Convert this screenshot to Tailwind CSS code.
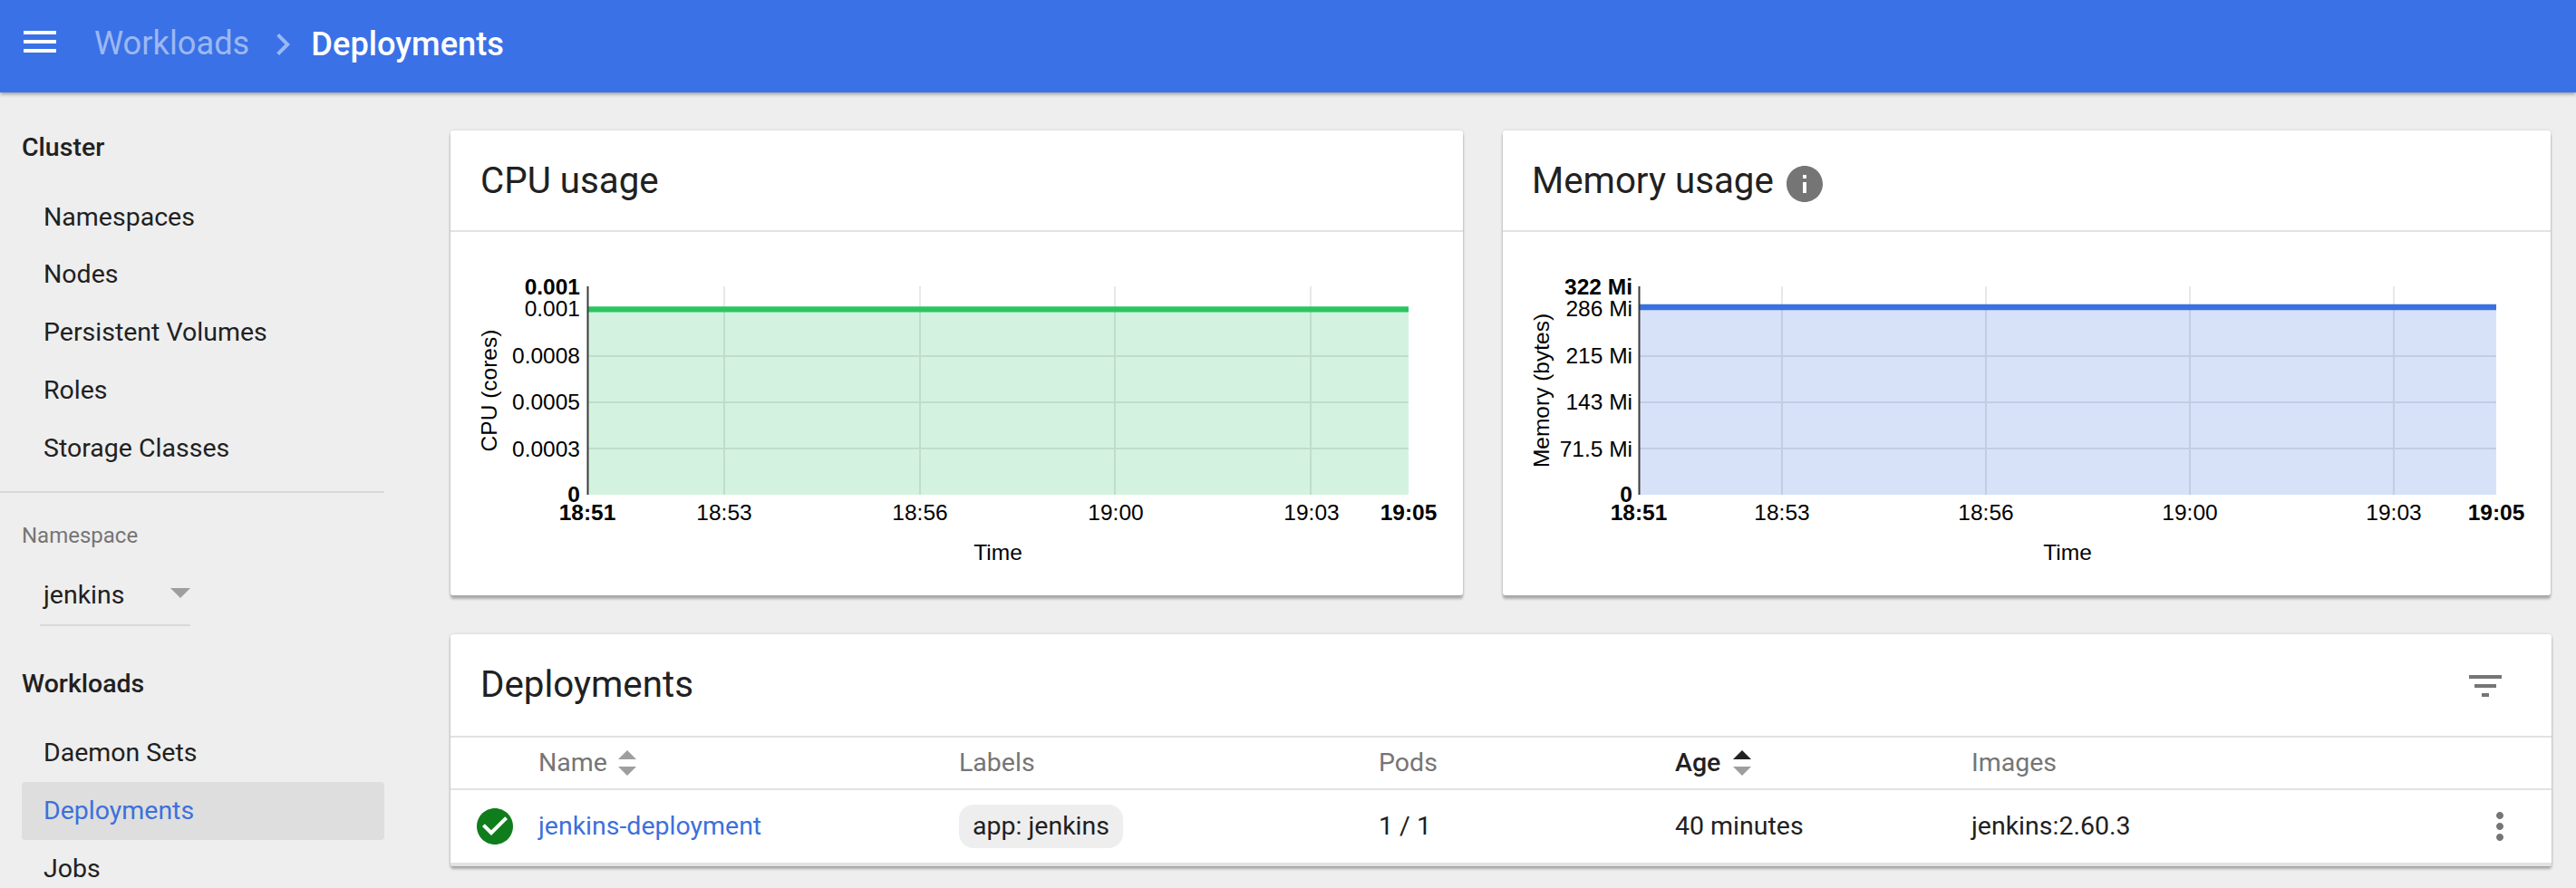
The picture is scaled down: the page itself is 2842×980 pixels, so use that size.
<!DOCTYPE html>
<html lang="en">
<head>
    <meta charset="UTF-8">
    <title>Deployments</title>
    <script src="https://cdn.jsdelivr.net/npm/@tailwindcss/browser@4"></script>
</head>
<body class="bg-[#eeeeee] font-['Roboto',sans-serif] text-[#212121] h-[980px] overflow-hidden">
    <!-- Top bar -->
    <header class="h-[102px] bg-[#3a71e6] shadow-[0_2px_4px_rgba(0,0,0,.35)] flex items-center pl-[20px] pb-[6px] relative text-[36.25px] leading-none">
        <svg class="w-[48px] h-[48px] mr-[36px] mb-[4px]" viewBox="0 0 24 24" fill="#fff"><path d="M3 18h18v-2H3v2zm0-5h18v-2H3v2zm0-7v2h18V6H3z"/></svg>
        <span class="text-white/50">Workloads</span>
        <svg class="w-[48px] h-[48px] ml-[13px] mr-[7px] mt-[2px]" viewBox="0 0 24 24" fill="#9ab8f3"><path d="M8.6 7.4 10 6l6 6-6 6-1.4-1.4L13.2 12z"/></svg>
        <span class="text-white font-medium pt-[3px]">Deployments</span>
    </header>

    <div class="flex">
        <!-- Sidebar -->
        <aside class="w-[424px] mr-[73px] pt-[28px] shrink-0 text-[28.5px]">
            <div class="h-[64px] pl-[24px] pt-[2px] flex items-center font-medium">Cluster</div>
            <ul class="mt-[14px] pl-[24px]">
                <li class="h-[63.75px] pl-[24px] flex items-center">Namespaces</li>
                <li class="h-[63.75px] pl-[24px] flex items-center">Nodes</li>
                <li class="h-[63.75px] pl-[24px] flex items-center">Persistent Volumes</li>
                <li class="h-[63.75px] pl-[24px] flex items-center">Roles</li>
                <li class="h-[63.75px] pl-[24px] flex items-center">Storage Classes</li>
            </ul>
            <div class="mt-[15px] border-t-2 border-[#d9d9d9]"></div>
            <div class="mt-[31px] pl-[24px] h-[32px] flex items-center text-[24px] text-[#757575]">Namespace</div>
            <div class="ml-[44px] mt-[19px] w-[166px] h-[65px] pl-[4px] border-b-2 border-[#d9d9d9] flex items-center justify-between">
                <span>jenkins</span>
                <span class="w-0 h-0 border-x-[11px] border-x-transparent border-t-[11px] border-t-[#9e9e9e] mb-[6px]"></span>
            </div>
            <div class="mt-[32px] h-[64px] pl-[24px] pt-[2px] flex items-center font-medium">Workloads</div>
            <ul class="mt-[12px] pl-[24px]">
                <li class="h-[64px] pl-[24px] pt-[2px] flex items-center">Daemon Sets</li>
                <li class="h-[64px] pl-[24px] pt-[2px] flex items-center bg-[#dedede] rounded-[4px] text-[#3d70dc]">Deployments</li>
                <li class="h-[64px] pl-[24px] pt-[2px] flex items-center">Jobs</li>
            </ul>
        </aside>

        <!-- Main content -->
        <main class="pt-[42px] w-[2318px] shrink-0">
            <div class="flex gap-[44px]">
                <!-- CPU card -->
                <section class="w-[1117px] h-[513px] bg-white rounded-[3px] shadow-[0_4px_3px_rgba(0,0,0,.28),0_0_3px_rgba(0,0,0,.14)]">
                    <div class="h-[112px] border-b-2 border-[#e2e2e2] pl-[33px] pt-[3px] flex items-center text-[40.3px]">CPU usage</div>
                    <svg class="block font-['Liberation_Sans',sans-serif] text-[24.5px]" width="1117" height="401" viewBox="497 256 1117 401">
                        <rect x="648" y="341" width="906" height="205" fill="#d3f3e0"/>
                        <g stroke="#000" stroke-opacity=".09" stroke-width="2">
                            <path d="M799 316V546M1015 316V546M1230 316V546M1446 316V546M648 393H1554M648 444H1554M648 495H1554"/>
                        </g>
                        <path d="M648 341.4H1554" stroke="#2bc55f" stroke-width="6.4"/>
                        <path d="M648.5 316V546" stroke="#3a3a3a" stroke-width="2"/>
                        <g text-anchor="end" dominant-baseline="central">
                            <text x="640" y="316" font-weight="bold">0.001</text>
                            <text x="640" y="340.7">0.001</text>
                            <text x="640" y="392">0.0008</text>
                            <text x="640" y="443.5">0.0005</text>
                            <text x="640" y="495">0.0003</text>
                            <text x="640" y="545.6" font-weight="bold">0</text>
                        </g>
                        <g text-anchor="middle" dominant-baseline="central">
                            <text x="648" y="565" font-weight="bold">18:51</text>
                            <text x="799" y="565">18:53</text>
                            <text x="1015" y="565">18:56</text>
                            <text x="1231" y="565">19:00</text>
                            <text x="1447" y="565">19:03</text>
                            <text x="1554" y="565" font-weight="bold">19:05</text>
                            <text x="1101" y="609">Time</text>
                            <text transform="translate(539.5 431) rotate(-90)">CPU (cores)</text>
                        </g>
                    </svg>
                </section>

                <!-- Memory card -->
                <section class="w-[1156px] h-[513px] bg-white rounded-[3px] shadow-[0_4px_3px_rgba(0,0,0,.28),0_0_3px_rgba(0,0,0,.14)]">
                    <div class="h-[112px] border-b-2 border-[#e2e2e2] pl-[32px] pt-[3px] flex items-center text-[40.3px]">
                        Memory usage
                        <svg class="w-[48px] h-[48px] ml-[10px] mt-[4px]" viewBox="0 0 24 24" fill="#757575"><path d="M12 2C6.48 2 2 6.48 2 12s4.48 10 10 10 10-4.48 10-10S17.52 2 12 2zm1 15h-2v-6h2v6zm0-8h-2V7h2v2z"/></svg>
                    </div>
                    <svg class="block font-['Liberation_Sans',sans-serif] text-[24.5px]" width="1156" height="401" viewBox="1658 256 1156 401">
                        <rect x="1808" y="339" width="946" height="207" fill="#d7e2f9"/>
                        <g stroke="#000" stroke-opacity=".09" stroke-width="2">
                            <path d="M1966 316V546M2191 316V546M2416 316V546M2641 316V546M1808 393H2754M1808 444H2754M1808 495H2754"/>
                        </g>
                        <path d="M1808 339H2754" stroke="#3a70e0" stroke-width="6.4"/>
                        <path d="M1808.5 316V546" stroke="#3a3a3a" stroke-width="2"/>
                        <g text-anchor="end" dominant-baseline="central">
                            <text x="1801" y="316" font-weight="bold">322 Mi</text>
                            <text x="1801" y="340.7">286 Mi</text>
                            <text x="1801" y="392">215 Mi</text>
                            <text x="1801" y="443.5">143 Mi</text>
                            <text x="1801" y="495">71.5 Mi</text>
                            <text x="1801" y="545.6" font-weight="bold">0</text>
                        </g>
                        <g text-anchor="middle" dominant-baseline="central">
                            <text x="1808" y="565" font-weight="bold">18:51</text>
                            <text x="1966" y="565">18:53</text>
                            <text x="2191" y="565">18:56</text>
                            <text x="2416" y="565">19:00</text>
                            <text x="2641" y="565">19:03</text>
                            <text x="2754" y="565" font-weight="bold">19:05</text>
                            <text x="2281" y="609">Time</text>
                            <text transform="translate(1700 431) rotate(-90)">Memory (bytes)</text>
                        </g>
                    </svg>
                </section>
            </div>

            <!-- Deployments table -->
            <section class="mt-[43px] w-[2318px] h-[256px] bg-white rounded-[3px] shadow-[0_3px_3px_rgba(0,0,0,.28),0_0_3px_rgba(0,0,0,.14)] text-[28.5px]">
                <div class="h-[114px] border-b-2 border-[#e2e2e2] pl-[33px] pr-[49px] pt-[1px] flex items-center justify-between">
                    <span class="text-[40.3px]">Deployments</span>
                    <svg class="w-[48px] h-[48px]" viewBox="0 0 24 24" fill="#757575"><path d="M10 18h4v-2h-4v2zM3 6v2h18V6H3zm3 7h12v-2H6v2z"/></svg>
                </div>
                <div class="h-[58px] border-b-2 border-[#e2e2e2] grid grid-cols-[97px_464px_463px_327px_327px_1fr] items-center text-[#757575]">
                    <span></span>
                    <span class="flex items-center gap-[12px]">Name
                        <span class="flex flex-col gap-[8px]">
                            <span class="w-0 h-0 border-x-[10px] border-x-transparent border-b-[10px] border-b-[#9e9e9e]"></span>
                            <span class="w-0 h-0 border-x-[10px] border-x-transparent border-t-[10px] border-t-[#9e9e9e]"></span>
                        </span>
                    </span>
                    <span>Labels</span>
                    <span>Pods</span>
                    <span class="flex items-center gap-[14px] text-[#212121] font-medium">Age
                        <span class="flex flex-col gap-[8px]">
                            <span class="w-0 h-0 border-x-[10px] border-x-transparent border-b-[10px] border-b-[#212121]"></span>
                            <span class="w-0 h-0 border-x-[10px] border-x-transparent border-t-[10px] border-t-[#9e9e9e]"></span>
                        </span>
                    </span>
                    <span>Images</span>
                </div>
                <div class="h-[80px] grid grid-cols-[97px_464px_463px_327px_327px_1fr] items-center">
                    <span class="pl-[25px] flex">
                        <svg class="w-[48px] h-[48px]" viewBox="0 0 24 24"><path fill="#0f7d1c" d="M12 2C6.48 2 2 6.48 2 12s4.48 10 10 10 10-4.48 10-10S17.52 2 12 2z"/><path fill="#fff" d="m10 17-5-5 1.41-1.41L10 14.17l7.59-7.59L19 8z"/></svg>
                    </span>
                    <a href="#" class="text-[#3d70dc]">jenkins-deployment</a>
                    <span><span class="inline-flex items-center h-[48px] px-[15px] bg-[#eeeeee] rounded-[16px]">app: jenkins</span></span>
                    <span>1 / 1</span>
                    <span>40 minutes</span>
                    <span class="flex items-center justify-between pr-[33px]">jenkins:2.60.3
                        <svg class="w-[48px] h-[48px]" viewBox="0 0 24 24" fill="#757575"><path d="M12 8c1.1 0 2-.9 2-2s-.9-2-2-2-2 .9-2 2 .9 2 2 2zm0 2c-1.1 0-2 .9-2 2s.9 2 2 2 2-.9 2-2-.9-2-2-2zm0 6c-1.1 0-2 .9-2 2s.9 2 2 2 2-.9 2-2-.9-2-2-2z"/></svg>
                    </span>
                </div>
                <div class="h-[4px] bg-[#e2e2e2] rounded-b-[3px]"></div>
            </section>
        </main>
    </div>
</body>
</html>
